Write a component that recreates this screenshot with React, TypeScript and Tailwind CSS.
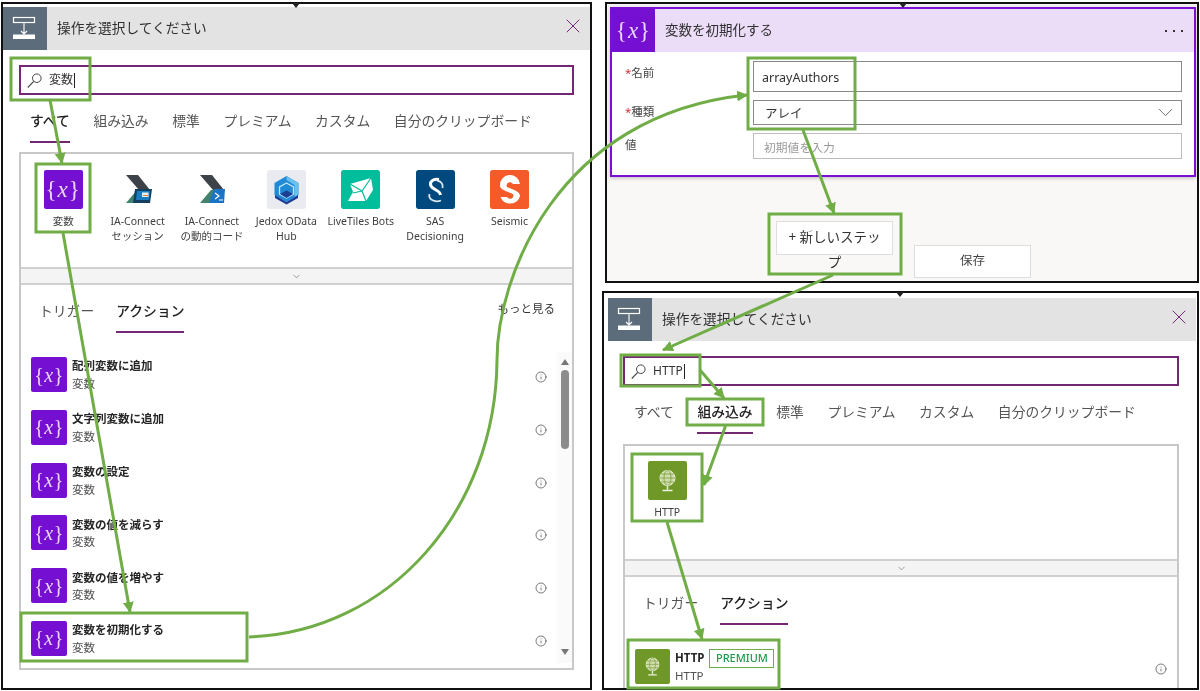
import { ChevronDown, Info, X } from "lucide-react";
import type { ReactNode } from "react";

const TABS = ["すべて", "組み込み", "標準", "プレミアム", "カスタム", "自分のクリップボード"];

function VarGlyph({ big }: { big?: boolean }) {
  return (
    <span
      className={`font-['Liberation_Serif',serif] font-normal leading-none text-[#e9d8fb] ${
        big ? "text-[23px] tracking-[1px]" : "text-[20px] tracking-[0.5px]"
      }`}
    >
      {"{"}
      <i>x</i>
      {"}"}
    </span>
  );
}

function OperationIcon() {
  return (
    <div className="flex h-[43px] w-[44px] shrink-0 items-center justify-center bg-[#5d6c7a]">
      <svg width="44" height="43" viewBox="0 0 44 43" fill="none">
        <rect x="10.5" y="10.5" width="21" height="5" stroke="#fff" strokeWidth="1.2" />
        <path d="M21 16v11M18 24l3 3 3-3" stroke="#fff" strokeWidth="1.1" />
        <rect x="10" y="27.5" width="22" height="4.5" fill="#fff" />
      </svg>
    </div>
  );
}

function SearchIcon() {
  return (
    <svg width="15" height="15" viewBox="0 0 15 15" fill="none" className="shrink-0">
      <circle cx="9.8" cy="5.2" r="4.3" stroke="#444" strokeWidth="1" />
      <path d="M6.7 8.3L0.8 14.5" stroke="#444" strokeWidth="1.1" />
    </svg>
  );
}

function IaConnect({ kind }: { kind: "session" | "code" }) {
  return (
    <svg width="39" height="39" viewBox="0 0 39 39">
      <path d="M8 5h12l12 15H21z" fill="#3c4248" />
      <path d="M19 20h9v13H8z" fill="#43826f" />
      {kind === "session" ? (
        <>
          <path d="M17 19h17l-2 14H15z" fill="#14405f" />
          <path d="M19 21h13l-1 9H18z" fill="#1b7cc0" />
          <path d="M24 22.5h6.500v4.500H24z" fill="#e9eef2" />
          <path d="M25 25h5v1h-5z" fill="#e5803a" />
        </>
      ) : (
        <>
          <path d="M22 19h11l-1 14H17z" fill="#1a73c5" />
          <path d="M23 23l4 3-4 3M27 30h4" stroke="#fff" strokeWidth="1.2" fill="none" />
        </>
      )}
    </svg>
  );
}

function Jedox() {
  return (
    <svg width="39" height="39" viewBox="0 0 39 39">
      <rect width="39" height="39" rx="2" fill="#e9ebf1" />
      <path d="M19.5 6l12 7v12l-12 7-12-7V13z" fill="#1f8ad6" />
      <path d="M19.5 6l12 7v12l-4 2V15l-8-5z" fill="#6cc0ee" />
      <path d="M19.5 13l7 4v7l-7 4-7-4v-7z" fill="none" stroke="#bfe2f7" strokeWidth="1.3" />
      <path d="M8 25l11.500 7L31 25v3l-11.500 6.500L8 28z" fill="#1c3e94" />
      <path d="M13 24l6.500-3.500L26 24l-6.500 4z" fill="#1c3e94" />
    </svg>
  );
}

function LiveTiles() {
  return (
    <svg width="39" height="39" viewBox="0 0 39 39" fill="none">
      <rect width="39" height="39" rx="2" fill="#00bd9b" />
      <path d="M9 14L30 8l2 12-7 11-18 0 5-9z" fill="#fff" />
      <path d="M9 14l12 7 9-13M21 21l4 10M21 21l-9 2" stroke="#00bd9b" strokeWidth="1.2" />
    </svg>
  );
}

function Sas() {
  return (
    <svg width="39" height="39" viewBox="0 0 39 39" fill="none">
      <rect width="39" height="39" rx="2" fill="#00497e" />
      <path d="M23 9.500C17 8.500 13 12 15 16C17 20 24 20 24.500 25" stroke="#fff" strokeWidth="3" />
      <path d="M21 10.500C25 11 27.500 14 26.500 18M13.500 24C12 29 18 33 25 30.500" stroke="#dbe6ef" strokeWidth="1.800" />
    </svg>
  );
}

function Seismic() {
  return (
    <svg width="39" height="39" viewBox="0 0 39 39">
      <rect width="39" height="39" rx="2" fill="#f55b2a" />
      <path
        d="M10 16A10 10 0 0 1 30 14H23A3.500 3.500 0 0 0 16.500 15.500C16.500 18 20 18 23 19.500C27 21 30 23 30 26A10 9 0 0 1 10.500 27H17A3.500 3.500 0 0 0 23.500 25.500C23.500 23.500 20 23 17 21.500C13 20 10 18 10 16Z"
        fill="#fff"
      />
    </svg>
  );
}

function Globe({ size }: { size: number }) {
  return (
    <svg width={size} height={size} viewBox="0 0 39 39" fill="none">
      <circle cx="19.5" cy="17" r="7.5" fill="#cfdcae" stroke="#eef3df" strokeWidth="1" />
      <ellipse cx="19.5" cy="17" rx="3.5" ry="7.5" stroke="#7d9f38" strokeWidth="0.8" />
      <path d="M12 17h15M13 13h13M13 21h13" stroke="#7d9f38" strokeWidth="0.8" />
      <path d="M19.5 24.5v4M14.5 29.5h10" stroke="#eef3df" strokeWidth="1.5" />
    </svg>
  );
}

function VarIcon() {
  return (
    <div className="flex h-[35px] w-[36px] shrink-0 items-center justify-center rounded-[2px] bg-[#7510d3]">
      <VarGlyph />
    </div>
  );
}

function HttpIcon() {
  return (
    <div className="flex h-[35px] w-[35px] shrink-0 items-center justify-center rounded-[2px] bg-[#6f9828]">
      <Globe size={33} />
    </div>
  );
}

function Tile({ icon, label }: { icon: ReactNode; label: string[] }) {
  return (
    <div className="flex w-[74.4px] flex-col items-center">
      <div className="flex h-[39px] w-[39px] items-center justify-center overflow-hidden rounded-[2px]">{icon}</div>
      <div className="mt-[5px] text-center text-[10.5px] leading-[15px] text-[#404040]">
        {label.map((line) => (
          <div key={line} className="whitespace-nowrap">
            {line}
          </div>
        ))}
      </div>
    </div>
  );
}

function ActionRow({ icon, title, sub, badge }: { icon: ReactNode; title: string; sub: string; badge?: boolean }) {
  return (
    <div className="flex h-[52.8px] items-start">
      {icon}
      <div className="ml-[5px] min-w-0 flex-1">
        <div className="flex h-[18px] items-center text-[11.5px] font-bold text-[#262626]">
          {title}
          {badge && (
            <span className="ml-[5px] flex h-[19px] w-[65px] items-center justify-center border border-[#70ad47] text-[11px] font-medium text-[#1d9a4a]">
              PREMIUM
            </span>
          )}
        </div>
        <div className="text-[11.5px] leading-[17px] text-[#505050]">{sub}</div>
      </div>
      <Info size={12} strokeWidth={1.4} className="mt-[14px] shrink-0 text-[#444]" />
    </div>
  );
}

function Picker({
  className,
  headerClass,
  searchClass,
  tabsClass,
  gridClass,
  query,
  activeTab,
  tiles,
  more,
  children,
  scrollbar,
}: {
  className: string;
  headerClass: string;
  searchClass: string;
  tabsClass: string;
  gridClass: string;
  query: string;
  activeTab: number;
  tiles: ReactNode;
  more?: boolean;
  children: ReactNode;
  scrollbar?: boolean;
}) {
  return (
    <div className={`absolute overflow-hidden border-2 border-[#111] bg-white ${className}`}>
      {/* header */}
      <div className={`flex h-[43px] items-center bg-[#e3e3e3] ${headerClass}`}>
        <OperationIcon />
        <div className="ml-[10px] flex-1 text-[13.7px] text-[#303030]">操作を選択してください</div>
        <X size={24} strokeWidth={1} className="mb-[6px] mr-[5px] text-[#742774]" />
      </div>

      {/* search */}
      <div className={`mt-[15px] flex h-[30px] items-center border-2 border-[#742774] pl-[6px] ${searchClass}`}>
        <SearchIcon />
        <span className="ml-[7px] text-[12px] text-[#333]">{query}</span>
        <span className="ml-[1px] h-[15px] w-px bg-[#222]" />
      </div>

      {/* tabs */}
      <div className={`mt-[12px] flex gap-[23.6px] ${tabsClass}`}>
        {TABS.map((tab, idx) => (
          <div
            key={tab}
            className={`h-[36px] whitespace-nowrap border-b-2 text-[13.8px] leading-[28px] ${
              idx === activeTab ? "border-[#742774] font-medium text-[#222]" : "border-transparent text-[#555]"
            }`}
          >
            {tab}
          </div>
        ))}
      </div>

      {/* connectors + list */}
      <div className={`flex h-[518px] flex-col border-2 border-[#c8c8c8] ${gridClass}`}>
        <div className="flex h-[113px] shrink-0 pl-[5px] pt-[16px]">{tiles}</div>
        <div className="flex h-[18px] shrink-0 items-center justify-center border-y-2 border-[#d0d0d0] bg-[#f4f4f4]">
          <ChevronDown size={11} strokeWidth={1.2} className="text-[#555]" />
        </div>
        <div className="flex h-[48px] shrink-0 items-start pl-[18px] pt-[15px]">
          <div className="h-[33px] whitespace-nowrap text-[13.8px] leading-[22px] text-[#555]">トリガー</div>
          <div className="ml-[22px] h-[33px] whitespace-nowrap border-b-2 border-[#742774] text-[13.8px] font-medium leading-[22px] text-[#222]">
            アクション
          </div>
          <div className="flex-1" />
          {more && <div className="mr-[17px] mt-[-2px] text-[11.5px] leading-[22px] text-[#333]">もっと見る</div>}
        </div>
        <div className="flex min-h-0 flex-1 pl-[10px] pt-[24px]">
          <div className="min-w-0 flex-1 pr-[10px]">{children}</div>
          {scrollbar && (
            <div className="-mt-[5px] flex h-[311px] w-[15px] shrink-0 flex-col items-center bg-[#fafafa] pt-[7px]">
              <div className="h-0 w-0 border-x-[4px] border-b-[6px] border-x-transparent border-b-[#777]" />
              <div className="mt-[5px] h-[79px] w-[8px] rounded-[4px] bg-[#8c8c8c]" />
              <div className="flex-1" />
              <div className="mb-[8px] h-0 w-0 border-x-[4px] border-t-[6px] border-x-transparent border-t-[#777]" />
            </div>
          )}
        </div>
      </div>
    </div>
  );
}

function FieldRow({ label, required, children }: { label: string; required?: boolean; children: ReactNode }) {
  return (
    <div className="flex">
      <div className="h-[24px] w-[141px] pl-[13px] text-[11.5px] leading-[24px] text-[#444]">
        {required && <span className="text-[#d13438]">*</span>}
        {label}
      </div>
      {children}
    </div>
  );
}

function Annotations() {
  const boxes = [
    [11, 58, 79, 42],
    [36, 164, 54, 68],
    [21, 613, 226, 48],
    [748, 58, 107, 71],
    [769, 214, 132, 60],
    [621, 355, 79, 31],
    [687, 399, 76, 26],
    [632, 454, 70, 67],
    [628, 640, 151, 48],
  ];
  const lines = [
    "M50 100L62 163",
    "M63 233L130 612",
    "M249 637C390 632 496 510 497 360C497 280 555 115 747 95",
    "M803 130L834 213",
    "M833 275L663 350",
    "M700 370L724 398",
    "M725.5 426L704 485",
    "M667 522L702 639",
  ];
  return (
    <svg className="pointer-events-none absolute left-0 top-0" width="1200" height="691" fill="none">
      <defs>
        <marker id="arrow" markerUnits="userSpaceOnUse" markerWidth="12" markerHeight="12" refX="10" refY="5.5" orient="auto">
          <path d="M0 0L11 5.5L0 11z" fill="#70ad47" />
        </marker>
      </defs>
      <path d="M292 3h8l-4 5zM899 3h8l-4 5zM896 292h8l-4 5z" fill="#222" />
      {boxes.map(([x, y, w, h]) => (
        <rect key={`${x}-${y}`} x={x} y={y} width={w} height={h} stroke="#70ad47" strokeWidth="3" />
      ))}
      {lines.map((d) => (
        <path key={d} d={d} stroke="#70ad47" strokeWidth="3" markerEnd="url(#arrow)" />
      ))}
    </svg>
  );
}

const ACTIONS = ["配列変数に追加", "文字列変数に追加", "変数の設定", "変数の値を減らす", "変数の値を増やす", "変数を初期化する"];

export default function App() {
  return (
    <div className="relative h-[691px] w-[1200px] overflow-hidden bg-white font-['Noto_Sans','Noto_Sans_CJK_JP',sans-serif] blur-[0.3px]">
      {/* left picker */}
      <Picker
        className="left-[1px] top-[2px] h-[688px] w-[591px]"
        headerClass="mt-[3px]"
        searchClass="mx-[16px]"
        tabsClass="ml-[27px]"
        gridClass="mx-[16px] mt-[9px]"
        query="変数"
        activeTab={0}
        more
        scrollbar
        tiles={
          <>
            <Tile
              icon={
                <div className="flex h-[39px] w-[39px] items-center justify-center bg-[#7510d3]">
                  <VarGlyph big />
                </div>
              }
              label={["変数"]}
            />
            <Tile icon={<IaConnect kind="session" />} label={["IA-Connect", "セッション"]} />
            <Tile icon={<IaConnect kind="code" />} label={["IA-Connect", "の動的コード"]} />
            <Tile icon={<Jedox />} label={["Jedox OData", "Hub"]} />
            <Tile icon={<LiveTiles />} label={["LiveTiles Bots"]} />
            <Tile icon={<Sas />} label={["SAS", "Decisioning"]} />
            <Tile icon={<Seismic />} label={["Seismic"]} />
          </>
        }
      >
        {ACTIONS.map((title) => (
          <ActionRow key={title} icon={<VarIcon />} title={title} sub="変数" />
        ))}
      </Picker>

      {/* initialize variable card */}
      <div className="absolute left-[605px] top-[2px] h-[281px] w-[594px] border-2 border-[#111] bg-[#f9f8f7]">
        <div className="ml-[3px] mt-[3px] h-[170px] w-[586px] border-2 border-[#7a10d6] bg-white shadow-[0_1px_4px_rgba(0,0,0,0.25)]">
          <div className="flex h-[43px] items-center bg-[#ebdcf8]">
            <div className="flex h-[43px] w-[43px] shrink-0 items-center justify-center bg-[#7510d3]">
              <VarGlyph big />
            </div>
            <div className="ml-[10px] flex-1 text-[13.5px] text-[#303030]">変数を初期化する</div>
            <div className="mr-[11px] flex gap-[6px]">
              <span className="h-[2px] w-[2px] bg-[#333]" />
              <span className="h-[2px] w-[2px] bg-[#333]" />
              <span className="h-[2px] w-[2px] bg-[#333]" />
            </div>
          </div>
          <div className="mt-[9px] flex flex-col gap-[8px]">
            <FieldRow label="名前" required>
              <div className="flex h-[31px] w-[429px] items-center border border-[#8a8a8a] pl-[8px] pt-[3px] text-[12.5px] text-[#333]">
                arrayAuthors
              </div>
            </FieldRow>
            <FieldRow label="種類" required>
              <div className="flex h-[25px] w-[429px] items-center justify-between border border-[#8a8a8a] pl-[11px] pr-[3px] text-[12.5px] text-[#333]">
                <span className="pt-[3px]">アレイ</span>
                <ChevronDown size={25} strokeWidth={0.8} className="shrink-0 text-[#555]" />
              </div>
            </FieldRow>
            <FieldRow label="値">
              <div className="flex h-[26px] w-[429px] items-center border border-[#bdbdbd] pl-[10px] pt-[3px] text-[11.8px] text-[#9a9a9a]">
                初期値を入力
              </div>
            </FieldRow>
          </div>
        </div>
        <div className="ml-[169px] mt-[44px] flex items-start gap-[21px]">
          <div className="h-[34px] w-[117px] border border-[#dedede] bg-white px-[11px] pt-[3px] text-center text-[13.5px] leading-[25px] text-[#333]">
            + 新しいステップ
          </div>
          <div className="mt-[24px] flex h-[33px] w-[117px] items-center justify-center border border-[#dedede] bg-white text-[12.5px] text-[#444]">
            保存
          </div>
        </div>
      </div>

      {/* right picker */}
      <Picker
        className="left-[602px] top-[291px] h-[399px] w-[597px]"
        headerClass="ml-[4px] mr-[1px] mt-[5px]"
        searchClass="ml-[19px] mr-[18px]"
        tabsClass="ml-[30px]"
        gridClass="ml-[19px] mr-[18px] mt-[10px]"
        query="HTTP"
        activeTab={1}
        tiles={
          <div className="-mt-[1px]">
            <Tile
              icon={
                <div className="flex h-[39px] w-[39px] items-center justify-center bg-[#6f9828]">
                  <Globe size={39} />
                </div>
              }
              label={["HTTP"]}
            />
          </div>
        }
      >
        <ActionRow icon={<HttpIcon />} title="HTTP" sub="HTTP" badge />
      </Picker>

      <Annotations />
    </div>
  );
}
